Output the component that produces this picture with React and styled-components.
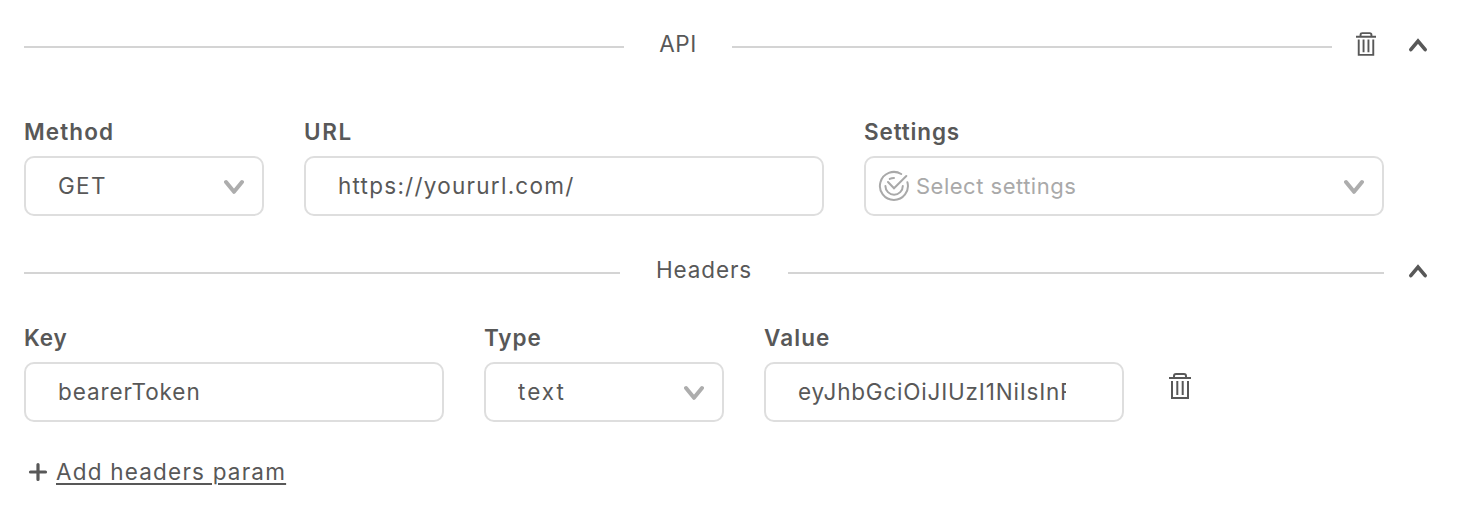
import React from "react";
import styled, { createGlobalStyle } from "styled-components";

const Global = createGlobalStyle`
  * { box-sizing: border-box; }
  body { margin: 0; background: #fff; color: #585858; font: 400 22.5px/28px Inter, "Liberation Sans", sans-serif; }
`;

const Page = styled.main`
  width: 1462px;
  height: 516px;
  padding: 30px 24px 0;
  display: flex;
  flex-direction: column;
  overflow: hidden;
`;
const SectionHead = styled.header`
  display: flex;
  align-items: center;
  height: 30px;
  margin-top: ${(p) => p.$top || 0}px;
`;
const Rule = styled.span`
  width: ${(p) => p.$width}px;
  height: 2px;
  margin-top: 3px;
  background: #d4d4d4;
`;
const Title = styled.h2`
  flex: none;
  width: ${(p) => p.$width}px;
  margin: 0 0 2px;
  font: inherit;
  text-align: center;
  white-space: nowrap;
`;
const Text = styled.span`
  letter-spacing: ${(p) => p.$spacing || 0}px;
  white-space: nowrap;
`;
const Placeholder = styled(Text)`
  font-size: 22px;
`;
const IconButton = styled.button`
  display: flex;
  flex: none;
  padding: 0;
  margin-left: ${(p) => p.$left || 0}px;
  margin-bottom: ${(p) => p.$bottom || 0}px;
  border: 0;
  background: none;
  color: inherit;
`;
const Row = styled.div`
  display: flex;
  gap: 40px;
  margin-top: ${(p) => p.$top}px;
`;
const Field = styled.div`
  display: flex;
  flex-direction: column;
  width: ${(p) => p.$width}px;
`;
const Label = styled.label`
  height: 38px;
  font-weight: 600;
`;
const Box = styled.div`
  display: flex;
  align-items: center;
  height: 60px;
  padding: 0 18px 0 ${(p) => p.$inset ?? 32}px;
  border: 2px solid #dedede;
  border-radius: 10px;
  color: ${(p) => (p.$muted ? "#a9a9a9" : "inherit")};
`;
const Content = styled.div`
  flex: 1;
  overflow: hidden;
  max-width: ${(p) => (p.$clip ? `${p.$clip}px` : "none")};
  margin-left: ${(p) => p.$left || 0}px;
`;
const RemoveSlot = styled.div`
  display: flex;
  align-items: center;
  height: 60px;
  margin: 32px 0 0 5px;
`;
const AddLink = styled.a`
  display: flex;
  align-items: center;
  gap: 8px;
  margin: 36px 0 0 4px;
`;
const Underlined = styled(Text)`
  text-decoration: underline;
  text-decoration-thickness: 2px;
  text-underline-offset: 3px;
`;

const Trash = ({ width = 22, height = 26, stroke = 2 }) => (
  <svg width={width} height={height} viewBox="0 0 22 26" fill="none" stroke="currentColor" strokeWidth={stroke}>
    <path d="M0 5H22M5 5V3Q5 1 7 1H15Q17 1 17 3V5M3 8V25H19V8M8.3 8V22M13.7 8V22" />
  </svg>
);
const ChevronUp = () => (
  <svg width="20" height="16" viewBox="0 0 20 16" fill="none" stroke="currentColor" strokeWidth="3.6" strokeLinecap="round">
    <path d="M2.8 12.6L10 4L17.2 12.6" />
  </svg>
);
const ChevronDown = () => (
  <svg width="20" height="16" viewBox="0 0 20 16" fill="none" stroke="#adadad" strokeWidth="4" strokeLinecap="round" strokeLinejoin="round">
    <path d="M2 4L10 13.8L18 4" />
  </svg>
);
const CheckCircle = () => (
  <svg width="32" height="32" viewBox="0 0 32 32" fill="none" stroke="currentColor" strokeWidth="2" strokeLinecap="round">
    <path d="M23.2 4A14 14 0 1 0 29.4 12.2M7.4 16A8.6 8.6 0 0 0 24.8 16M10 12L16 18.3L28.3 6M11.8 8.9Q13.6 7.9 16 7.9" />
  </svg>
);
const Plus = () => (
  <svg width="20" height="20" viewBox="0 0 20 20" fill="none" stroke="currentColor" strokeWidth="3.2" strokeLinecap="round">
    <path d="M2.5 10H17.5M10 2.5V17.5" />
  </svg>
);

function InputField({ label, labelSpacing, width, value, spacing, clip, select }) {
  return (
    <Field $width={width}>
      <Label><Text $spacing={labelSpacing}>{label}</Text></Label>
      <Box>
        <Content $clip={clip}><Text $spacing={spacing}>{value}</Text></Content>
        {select && <ChevronDown />}
      </Box>
    </Field>
  );
}

export default function App() {
  return (
    <>
      <Global />
      <Page>
        <SectionHead>
          <Rule $width={600} />
          <Title $width={108}><Text $spacing={0.6}>API</Text></Title>
          <Rule $width={600} />
          <IconButton $left={24} $bottom={2} aria-label="Delete API"><Trash width={20} height={24} stroke={2.1} /></IconButton>
          <IconButton $left={32} aria-label="Collapse API"><ChevronUp /></IconButton>
        </SectionHead>
        <Row $top={58}>
          <InputField label="Method" labelSpacing={1.1} width={240} value="GET" spacing={1.3} select />
          <InputField label="URL" labelSpacing={1.6} width={520} value="https://yoururl.com/" spacing={1.25} />
          <Field $width={520}>
            <Label><Text $spacing={0.85}>Settings</Text></Label>
            <Box $inset={12} $muted>
              <CheckCircle />
              <Content $left={6}><Placeholder $spacing={0.5}>Select settings</Placeholder></Content>
              <ChevronDown />
            </Box>
          </Field>
        </Row>
        <SectionHead $top={40}>
          <Rule $width={596} />
          <Title $width={168}><Text $spacing={0.85}>Headers</Text></Title>
          <Rule $width={596} />
          <IconButton $left={24} aria-label="Collapse headers"><ChevronUp /></IconButton>
        </SectionHead>
        <Row $top={38}>
          <InputField label="Key" labelSpacing={0.9} width={420} value="bearerToken" spacing={0.9} />
          <InputField label="Type" labelSpacing={0.9} width={240} value="text" spacing={2} select />
          <InputField label="Value" labelSpacing={1.1} width={360} value="eyJhbGciOiJIUzI1NiIsInR5cCI6" spacing={0.8} clip={268} />
          <RemoveSlot><IconButton aria-label="Delete header"><Trash /></IconButton></RemoveSlot>
        </Row>
        <AddLink><Plus /><Underlined $spacing={1.2}>Add headers param</Underlined></AddLink>
      </Page>
    </>
  );
}
